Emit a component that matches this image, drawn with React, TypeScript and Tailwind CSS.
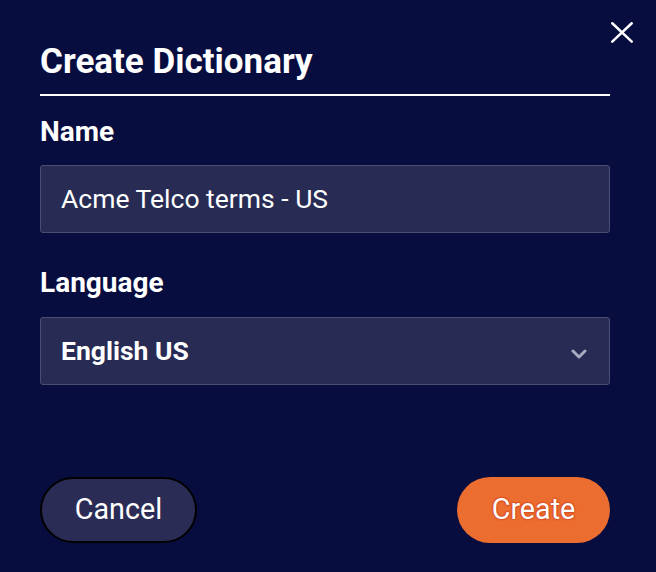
import React from 'react';

export default function App() {
  return (
    <div
      className="relative w-[656px] h-[572px] bg-[#080d40] text-white overflow-hidden"
      style={{ fontFamily: 'Roboto, "Liberation Sans", sans-serif' }}
    >
      <button className="absolute top-[19px] right-[20px] w-[28px] h-[28px] flex items-center justify-center text-white">
        <svg width="26" height="26" viewBox="0 0 24 24" fill="none" stroke="currentColor" strokeWidth={2.3} strokeLinecap="round">
          <path d="M3 3l18 17M21 3L3 20" />
        </svg>
      </button>

      <div className="pl-[40px] pr-[46px]">
        <h1 className="pt-[42px] pb-[12px] text-[35px] leading-[40px] font-bold border-b-2 border-white">
          Create Dictionary
        </h1>

        <label className="block mt-[20px] text-[28px] leading-[32px] font-bold">Name</label>
        <div className="mt-[17px] h-[68px] flex items-center px-[20px] bg-[#282c54] border border-[#4a4e70] rounded-[3px] text-[26.5px]">
          Acme Telco terms - US
        </div>

        <label className="block mt-[34px] text-[28px] leading-[32px] font-bold">Language</label>
        <div className="mt-[18px] h-[68px] flex items-center justify-between pl-[20px] pr-[22px] bg-[#282c54] border border-[#4a4e70] rounded-[3px]">
          <span className="text-[26.5px] font-bold">English US</span>
          <svg width="16" height="10" viewBox="0 0 16 10" fill="none" stroke="#a9acbf" strokeWidth={3} strokeLinecap="round" strokeLinejoin="round" className="mt-[6px]">
            <path d="M2 2l6 6 6-6" />
          </svg>
        </div>

        <div className="mt-[92px] flex items-center justify-between">
          <button className="w-[157px] h-[66px] rounded-full bg-[#2a2c56] border-2 border-black text-[28.7px]">
            Cancel
          </button>
          <button
            className="w-[153px] h-[66px] rounded-full bg-[#eb6d2f] text-[28.7px]"
            style={{ textShadow: '0 0 2px #c8341a, 0 0 2px #c8341a' }}
          >
            Create
          </button>
        </div>
      </div>
    </div>
  );
}
